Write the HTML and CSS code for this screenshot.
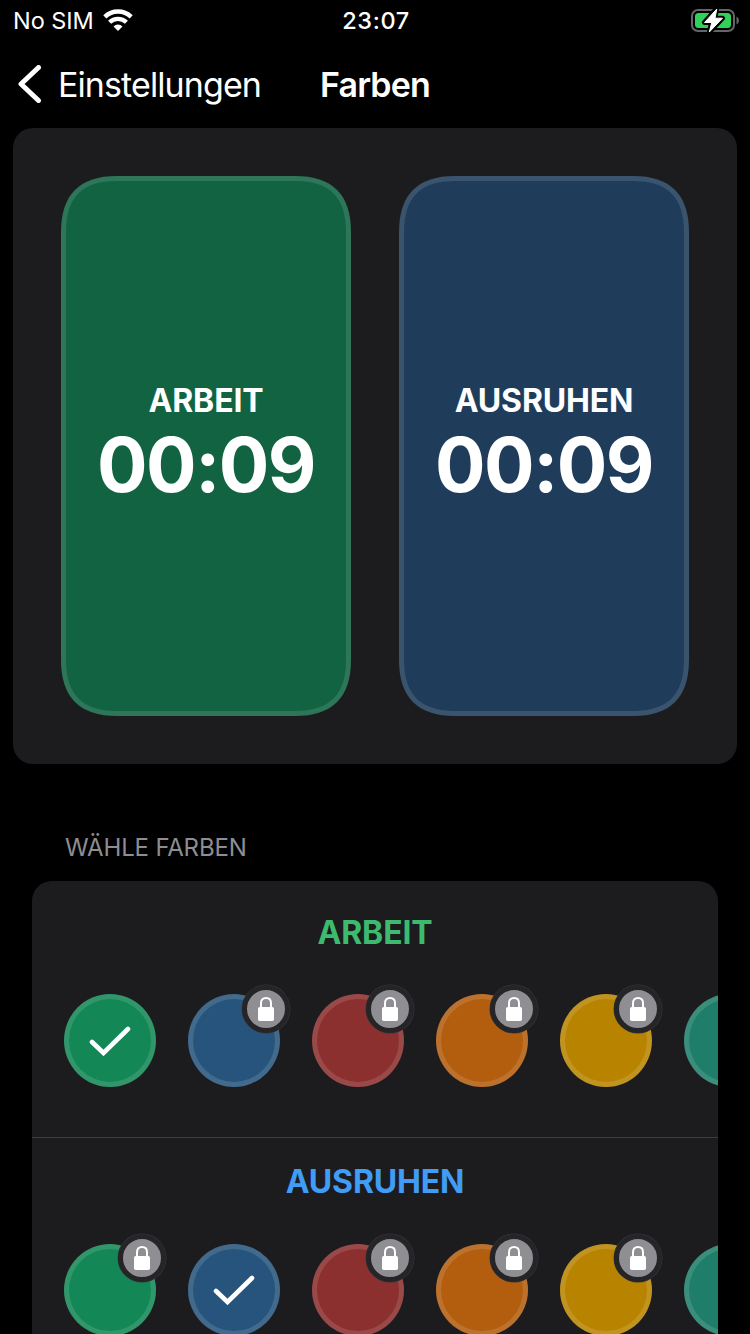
FILE: index.html
```html
<!DOCTYPE html>
<html lang="de">
<head>
<meta charset="utf-8">
<title>Farben</title>
<link rel="stylesheet" href="styles.css">
</head>
<body>
<svg class="defs" width="0" height="0" aria-hidden="true">
  <defs>
    <path id="screen" d="M56 0H234C271.5 0 290 18.5 290 56V484C290 521.5 271.5 540 234 540H56C18.5 540 0 521.5 0 484V56C0 18.5 18.5 0 56 0Z"/>
    <clipPath id="screen-clip"><use href="#screen"/></clipPath>
    <symbol id="lock" viewBox="0 0 16 24"><path d="M3 11V6.2C3 2.7 5 1 8 1S13 2.7 13 6.2V11" fill="none" stroke="#fff" stroke-width="2"/><rect x="0" y="10" width="16" height="14" rx="1.8" fill="#fff"/></symbol>
    <symbol id="check" viewBox="0 0 42 30"><path d="M3 16L14.5 27L39 3" fill="none" stroke="#fff" stroke-width="4.6" stroke-linecap="round" stroke-linejoin="miter"/></symbol>
  </defs>
</svg>
<header class="status">
  <div class="carrier"><span class="sim">No SIM</span>
    <svg class="wifi" width="30" height="22" viewBox="0 0 30 22"><g fill="none" stroke="#fff" stroke-width="4.4"><path d="M1.8 7.8A19 19 0 0 1 28.2 7.8"/><path d="M6.6 13.3A12 12 0 0 1 23.4 13.3"/></g><path d="M10.5 17.4A6.3 6.3 0 0 1 19.5 17.4L15 22Z" fill="#fff"/></svg>
  </div>
  <span class="clock">23:07</span>
  <svg class="battery" width="48" height="26" viewBox="0 0 48 26"><rect x="1" y="3" width="42" height="21" rx="6" fill="none" stroke="#656567" stroke-width="2"/><rect x="4" y="6" width="36" height="15" rx="3.5" fill="#30d158"/><path d="M45.5 9.5Q48 10.5 48 13.5T45.5 17.5Z" fill="#656567"/><path d="M25.5 2L13.5 15.5H20.5L18.5 25L31.5 11.2H24Z" fill="#000" stroke="#000" stroke-width="5" stroke-linejoin="round"/><path d="M25.8 2L13.5 15.5H20.8L18.3 25L31.5 11.2H24Z" fill="#fff" stroke="#fff" stroke-width="1" stroke-linejoin="round"/></svg>
</header>
<nav class="nav">
  <div class="back"><svg width="24" height="38" viewBox="0 0 24 38"><path d="M20.5 2.5L3 19L20.5 35.5" fill="none" stroke="#fff" stroke-width="5" stroke-linecap="round" stroke-linejoin="round"/></svg><span class="back-label">Einstellungen</span></div>
  <h1 class="title">Farben</h1>
</nav>
<main>
  <section class="preview">
    <div class="phone green">
      <svg class="shape" width="290" height="540"><use href="#screen" class="fill"/><use href="#screen" class="edge" clip-path="url(#screen-clip)"/></svg>
      <span class="mode">ARBEIT</span><span class="time">00:09</span>
    </div>
    <div class="phone blue">
      <svg class="shape" width="290" height="540"><use href="#screen" class="fill"/><use href="#screen" class="edge" clip-path="url(#screen-clip)"/></svg>
      <span class="mode rest">AUSRUHEN</span><span class="time">00:09</span>
    </div>
  </section>
  <h2 class="caption">WÄHLE FARBEN</h2>
  <section class="picker">
    <div class="group">
      <h3 class="name work">ARBEIT</h3>
      <div class="row">
        <div class="swatch c-green"><svg class="check"><use href="#check"/></svg></div>
        <div class="swatch c-blue"><span class="badge"><svg class="lock"><use href="#lock"/></svg></span></div>
        <div class="swatch c-red"><span class="badge"><svg class="lock"><use href="#lock"/></svg></span></div>
        <div class="swatch c-orange"><span class="badge"><svg class="lock"><use href="#lock"/></svg></span></div>
        <div class="swatch c-yellow"><span class="badge"><svg class="lock"><use href="#lock"/></svg></span></div>
        <div class="swatch c-teal"></div>
      </div>
    </div>
    <div class="group second">
      <h3 class="name pause">AUSRUHEN</h3>
      <div class="row">
        <div class="swatch c-green"><span class="badge"><svg class="lock"><use href="#lock"/></svg></span></div>
        <div class="swatch c-blue"><svg class="check"><use href="#check"/></svg></div>
        <div class="swatch c-red"><span class="badge"><svg class="lock"><use href="#lock"/></svg></span></div>
        <div class="swatch c-orange"><span class="badge"><svg class="lock"><use href="#lock"/></svg></span></div>
        <div class="swatch c-yellow"><span class="badge"><svg class="lock"><use href="#lock"/></svg></span></div>
        <div class="swatch c-teal"></div>
      </div>
    </div>
  </section>
</main>
</body>
</html>
```
FILE: styles.css
```css
* { box-sizing: border-box; }
html, body { margin: 0; height: 1334px; overflow: hidden; background: #000; }
body { color: #fff; font-family: Inter, "Liberation Sans", sans-serif; font-feature-settings: "calt" 0; }
h1, h2, h3 { margin: 0; }
svg { display: block; flex: none; }
.defs { position: absolute; }

.status { display: grid; grid-template-columns: 1fr auto 1fr; height: 40px; padding: 0 11px 2px 13px; align-items: center; }
.carrier { display: flex; align-items: center; gap: 9px; }
.sim { font-size: 23.5px; line-height: 38px; padding-top: 2px; letter-spacing: -0.05px; }
.clock { font-size: 23.5px; font-weight: 500; line-height: 38px; padding-top: 2px; letter-spacing: 0.6px; }
.battery { justify-self: end; }

.nav { display: grid; grid-template-columns: 1fr auto 1fr; height: 88px; padding: 0 18px; align-items: center; }
.back { display: flex; align-items: center; gap: 16px; }
.back-label { padding-top: 1px; font-size: 34px; line-height: 42px; letter-spacing: -0.9px; }
.title { padding-top: 1px; font-size: 34px; font-weight: 600; line-height: 42px; letter-spacing: -0.85px; }

.preview { display: flex; gap: 48px; margin: 0 13px; height: 636px; padding: 48px; border-radius: 20px; background: #1c1c1e; }
.phone { position: relative; display: flex; flex-direction: column; align-items: center; width: 290px; height: 540px; padding-top: 205px; }
.shape { position: absolute; inset: 0; }
.green .fill { fill: #116342; }
.blue .fill { fill: #1f3d5b; }
.edge { fill: none; stroke: rgba(255, 255, 255, .12); stroke-width: 10px; }
.mode { position: relative; font-size: 32px; font-weight: 650; line-height: 40px; letter-spacing: -0.15px; }
.time { position: relative; font-size: 75px; font-weight: 680; line-height: 88px; letter-spacing: -1.5px; }

.caption { margin: 68px 0 0 65px; height: 49px; color: #8d8d93; font-size: 24px; font-weight: 400; line-height: 31px; letter-spacing: -0.17px; }
.picker { margin: 0 32px; height: 453px; border-radius: 20px 20px 0 0; background: #1c1c1e; overflow: hidden; }
.group { height: 257px; padding: 32px 0 0 32px; border-bottom: 1px solid #3d3d41; }
.second { height: auto; padding-top: 24px; border: 0; }
.name { margin-left: -32px; font-size: 32px; font-weight: 650; line-height: 40px; letter-spacing: -0.15px; text-align: center; }
.work { color: #3dba6f; }
.pause { color: #409cf5; }
.row { display: flex; gap: 32px; padding-top: 41px; }
.second .row { padding-top: 42px; }
.swatch { position: relative; display: flex; align-items: center; justify-content: center; flex: none; width: 92px; height: 93px; border-radius: 50%; box-shadow: inset 0 0 0 5px rgba(255, 255, 255, .13); }
.second .swatch { height: 92px; }
.c-green { background: #138856; }
.c-blue { background: #27547d; }
.c-red { background: #8b2f2f; }
.c-orange { background: #b35e0e; }
.c-yellow { background: #b88400; }
.c-teal { background: #1e7e69; }
.check { width: 42px; height: 30px; }
.badge { position: absolute; top: -9px; right: -10px; display: flex; align-items: center; justify-content: center; width: 48px; height: 48px; border: 5px solid #252528; border-radius: 50%; background: #8e8e93; box-shadow: 0 0 0 0.5px #39393c; }
.second .badge { top: -10px; }
.lock { width: 16px; height: 24px; }
```
